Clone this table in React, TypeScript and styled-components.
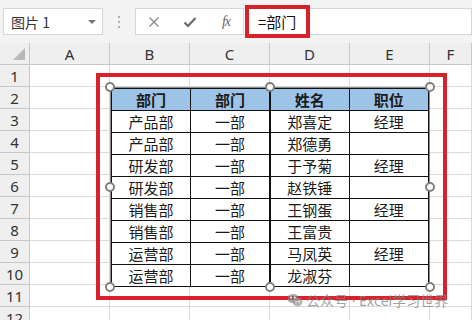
import React from 'react';
import styled, { createGlobalStyle } from 'styled-components';

const GlobalStyle = createGlobalStyle`
  body {
    margin: 0;
    font-family: "Noto Sans", "Noto Sans CJK SC", sans-serif;
    background: #fff;
  }
`;

const Frame = styled.div`
  position: relative;
  width: 472px;
  height: 320px;
  overflow: hidden;
  background: #fff;
`;

const FormulaBar = styled.div`
  height: 43px;
  background: #f3f3f3;
  display: flex;
  align-items: center;
  padding-left: 3px;
  box-sizing: border-box;
`;

const NameBox = styled.div`
  width: 100px;
  height: 27px;
  box-sizing: border-box;
  background: #fff;
  border: 1px solid #d6d6d6;
  display: flex;
  align-items: center;
  justify-content: space-between;
  padding: 0 6px 0 7px;
  font-size: 14px;
  color: #333;
  font-family: "Noto Sans CJK SC", sans-serif;
`;

const DropArrow = styled.span`
  width: 0;
  height: 0;
  border-left: 4px solid transparent;
  border-right: 4px solid transparent;
  border-top: 4px solid #777;
`;

const Grip = styled.div`
  width: 32px;
  display: flex;
  flex-direction: column;
  align-items: center;
  gap: 3px;

  span {
    width: 2px;
    height: 2px;
    background: #b0b0b0;
  }
`;

const FxBox = styled.div`
  width: 108px;
  height: 27px;
  box-sizing: border-box;
  background: #fff;
  border: 1px solid #d6d6d6;
  border-right: none;
  display: grid;
  grid-template-columns: 36px 36px 36px;
  align-items: center;
  justify-items: center;
`;

const FxLabel = styled.span`
  font-family: "Liberation Serif", serif;
  font-style: italic;
  font-size: 14px;
  color: #666;
  letter-spacing: -1px;
`;

const FormulaInput = styled.div`
  position: relative;
  flex: 1;
  height: 27px;
  box-sizing: border-box;
  background: #fff;
  border: 1px solid #d6d6d6;
  display: flex;
  align-items: center;
  padding-left: 14px;
  font-size: 15px;
  color: #111;
  font-family: "Noto Sans CJK SC", sans-serif;
`;

const Highlight = styled.span`
  position: absolute;
  left: 1px;
  top: -4px;
  width: 65px;
  height: 33px;
  box-sizing: border-box;
  border: 4px solid #d7212b;
`;

const Sheet = styled.div`
  display: grid;
  grid-template-columns: 30px repeat(5, 80px) 1fr;
  grid-auto-rows: 22px;
`;

const Cell = styled.div<{ $head?: boolean }>`
  box-sizing: border-box;
  border-right: 1px solid ${(p) => (p.$head ? '#c8c8c8' : '#dadada')};
  border-bottom: 1px solid ${(p) => (p.$head ? '#c8c8c8' : '#dadada')};
  background: ${(p) => (p.$head ? '#efefef' : '#fff')};
  display: flex;
  align-items: center;
  justify-content: center;
  font-size: 15px;
  color: #333;
  position: relative;
`;

const Corner = styled(Cell)`
  &::after {
    content: '';
    position: absolute;
    right: 4px;
    bottom: 4px;
    width: 0;
    height: 0;
    border-left: 12px solid transparent;
    border-bottom: 12px solid #b8b8b8;
  }
`;

const Picture = styled.div`
  position: absolute;
  left: 110px;
  top: 87px;
  width: 320px;
  height: 200px;
  box-sizing: border-box;
  background: #fff;
  border: 1px solid #8a8a8a;
`;

const DataTable = styled.table`
  border-collapse: collapse;
  table-layout: fixed;
  width: 318px;
  font-family: "Noto Sans CJK SC", sans-serif;
  font-size: 15px;
  color: #1a1a1a;

  td,
  th {
    height: 22px;
    box-sizing: border-box;
    padding: 0;
    border: 1px solid #111;
    text-align: center;
    line-height: 20px;
  }

  th {
    background: #9dc3e6;
    font-weight: bold;
  }

  td:nth-child(2),
  th:nth-child(2) {
    border-right-width: 2px;
  }
`;

const Handle = styled.span<{ $x: number; $y: number }>`
  position: absolute;
  left: ${(p) => p.$x - 5}px;
  top: ${(p) => p.$y - 5}px;
  width: 10px;
  height: 10px;
  box-sizing: border-box;
  border-radius: 50%;
  border: 2px solid #808080;
  background: #fff;
`;

const RedBox = styled.div`
  position: absolute;
  left: 96px;
  top: 73px;
  width: 351px;
  height: 227px;
  box-sizing: border-box;
  border: 4px solid #d7212b;
`;

const Watermark = styled.div`
  position: absolute;
  left: 287px;
  top: 290px;
  display: flex;
  align-items: center;
  gap: 3px;
  font-size: 14px;
  color: rgba(130, 130, 130, 0.75);
  font-family: "Noto Sans", "Noto Sans CJK SC", sans-serif;
  white-space: nowrap;
`;

const columns = ['A', 'B', 'C', 'D', 'E', 'F'];

const rows = [
  ['产品部', '一部', '郑喜定', '经理'],
  ['产品部', '一部', '郑德勇', ''],
  ['研发部', '一部', '于予菊', '经理'],
  ['研发部', '一部', '赵铁锤', ''],
  ['销售部', '一部', '王钢蛋', '经理'],
  ['销售部', '一部', '王富贵', ''],
  ['运营部', '一部', '马凤英', '经理'],
  ['运营部', '一部', '龙淑芬', ''],
];

const handles: [number, number][] = [
  [110, 87],
  [270, 87],
  [430, 87],
  [110, 187],
  [430, 187],
  [110, 287],
  [270, 287],
  [430, 287],
];

const WeChatIcon = () => (
  <svg width="16" height="14" viewBox="0 0 16 14">
    <ellipse cx="6" cy="5.5" rx="5.5" ry="4.6" fill="rgba(130,130,130,0.7)" />
    <ellipse cx="10.5" cy="9" rx="5" ry="4.2" fill="rgba(150,150,150,0.7)" />
    <circle cx="4" cy="4.5" r="0.9" fill="#fff" />
    <circle cx="7.8" cy="4.5" r="0.9" fill="#fff" />
    <circle cx="9" cy="8.5" r="0.8" fill="#fff" />
    <circle cx="12.2" cy="8.5" r="0.8" fill="#fff" />
  </svg>
);

export default function App() {
  return (
    <Frame>
      <GlobalStyle />
      <FormulaBar>
        <NameBox>
          图片 1
          <DropArrow />
        </NameBox>
        <Grip>
          <span />
          <span />
          <span />
        </Grip>
        <FxBox>
          <svg width="12" height="12" viewBox="0 0 12 12">
            <path d="M1.5 1.5 L10.5 10.5 M10.5 1.5 L1.5 10.5" stroke="#8a8a8a" strokeWidth="1.4" />
          </svg>
          <svg width="14" height="12" viewBox="0 0 14 12">
            <path d="M1.5 6.5 L5 10 L12.5 2" stroke="#6a6a6a" strokeWidth="2.2" fill="none" />
          </svg>
          <FxLabel>fx</FxLabel>
        </FxBox>
        <FormulaInput>
          =部门
          <Highlight />
        </FormulaInput>
      </FormulaBar>

      <Sheet>
        <Corner $head />
        {columns.map((c) => (
          <Cell $head key={c}>
            {c}
          </Cell>
        ))}
        {Array.from({ length: 12 }, (_, r) => (
          <React.Fragment key={r}>
            <Cell $head>{r + 1}</Cell>
            {columns.map((c) => (
              <Cell key={c} />
            ))}
          </React.Fragment>
        ))}
      </Sheet>

      <Picture>
        <DataTable>
          <thead>
            <tr>
              <th>部门</th>
              <th>部门</th>
              <th>姓名</th>
              <th>职位</th>
            </tr>
          </thead>
          <tbody>
            {rows.map((row, i) => (
              <tr key={i}>
                {row.map((v, j) => (
                  <td key={j}>{v}</td>
                ))}
              </tr>
            ))}
          </tbody>
        </DataTable>
      </Picture>

      <RedBox />
      {handles.map(([x, y]) => (
        <Handle key={`${x}-${y}`} $x={x} $y={y} />
      ))}

      <Watermark>
        <WeChatIcon />
        <span>公众号 · Excel学习世界</span>
      </Watermark>
    </Frame>
  );
}
